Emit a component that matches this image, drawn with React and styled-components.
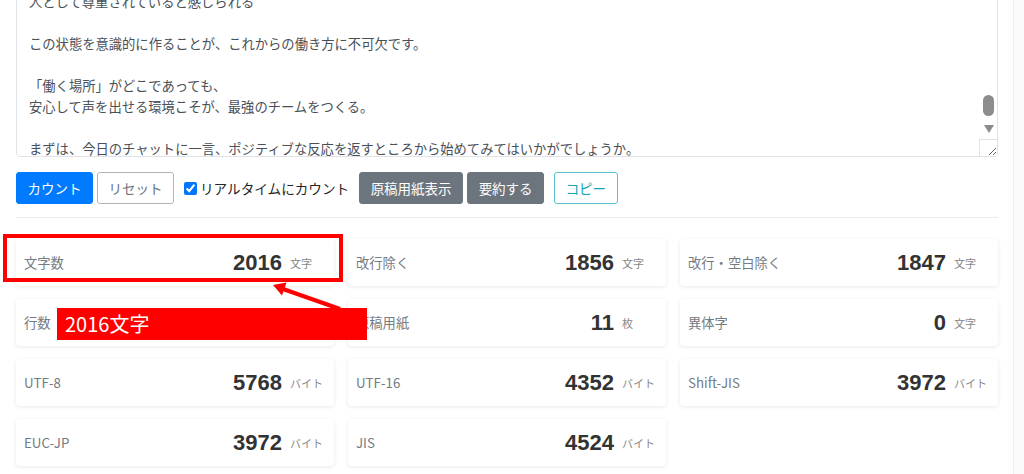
import React, { useEffect, useRef } from 'react';
import styled, { createGlobalStyle } from 'styled-components';

const GlobalStyle = createGlobalStyle`
  html, body {
    margin: 0;
    padding: 0;
    background: #fff;
    overflow: hidden;
  }
  body {
    font-family: "Noto Sans CJK JP", "Noto Sans", sans-serif;
    color: #212529;
  }
`;

const Layout = styled.div`
  display: flex;
  height: 474px;
  overflow: hidden;
`;

const Main = styled.main`
  flex: 1;
  min-width: 0;
  padding: 0 15px 0 16px;
  margin-top: -43px;
`;

const Gutter = styled.aside`
  width: 10px;
  background: #fafbfc;
  border-left: 1px solid #eceef1;
`;

const Field = styled.div`
  position: relative;
  height: 200px;
`;

const TextArea = styled.textarea`
  display: block;
  width: 100%;
  height: 100%;
  box-sizing: border-box;
  padding: 6px 30px 6px 12px;
  border: 1px solid #dfe3e7;
  border-radius: 4px;
  font: 13.3px/21px "Noto Sans CJK JP", sans-serif;
  color: #495057;
  resize: vertical;
  outline: none;
`;

/* the textarea's own scrollbar, drawn over its right edge */
const Thumb = styled.div`
  position: absolute;
  right: 4px;
  top: 138px;
  width: 11px;
  height: 21px;
  border-radius: 6px;
  background: #8c8c8c;
  pointer-events: none;
`;

const DownArrow = styled.div`
  position: absolute;
  right: 4px;
  top: 168px;
  width: 0;
  height: 0;
  border-left: 5px solid transparent;
  border-right: 5px solid transparent;
  border-top: 8px solid #8c8c8c;
  pointer-events: none;
`;

const Corner = styled.div`
  position: absolute;
  right: 1px;
  bottom: 1px;
  width: 17px;
  height: 16px;
  border-left: 1px solid #e3e3e3;
  border-top: 1px solid #e3e3e3;
  pointer-events: none;
`;

const Toolbar = styled.div`
  display: flex;
  align-items: center;
  gap: 4px;
  margin-top: 15px;
  height: 32px;
`;

const palette = {
  primary: { bg: '#007bff', border: '#007bff', color: '#fff' },
  secondary: { bg: '#6c757d', border: '#6c757d', color: '#fff' },
  outline: { bg: '#fff', border: '#adb5bd', color: '#6c757d' },
  info: { bg: '#fff', border: '#5bc0d3', color: '#17a2b8' },
};

const Button = styled.button`
  height: 32px;
  box-sizing: border-box;
  padding: 0 10.5px;
  border-radius: 3px;
  border: 1px solid ${(p) => palette[p.$variant].border};
  background: ${(p) => palette[p.$variant].bg};
  color: ${(p) => palette[p.$variant].color};
  font: 13.5px "Noto Sans CJK JP", sans-serif;
  margin-left: ${(p) => p.$space || 0}px;
  cursor: pointer;
`;

const Check = styled.label`
  display: flex;
  align-items: center;
  gap: 3px;
  margin: 0 6px 0 6px;
  font-size: 13.6px;
  color: #212529;

  input {
    width: 13px;
    height: 13px;
    margin: 0;
  }
`;

const Divider = styled.hr`
  border: 0;
  border-top: 1px solid #e9ecef;
  margin: 13px 0 21px;
`;

const Grid = styled.div`
  position: relative;
  display: grid;
  grid-template-columns: repeat(3, 1fr);
  column-gap: 14px;
  row-gap: 13px;
`;

const Card = styled.div`
  height: 47px;
  display: flex;
  align-items: center;
  padding-left: 8px;
  background: #fff;
  border-radius: 4px;
  box-shadow: 0 1px 4px rgba(0, 0, 0, 0.09);
`;

const Label = styled.span`
  flex: 1;
  font-size: 13.3px;
  color: #737b83;
`;

const Value = styled.span`
  font: bold 22px "Liberation Sans", Arial, sans-serif;
  color: #333;
`;

const Unit = styled.span`
  width: 36px;
  margin-left: 8px;
  padding-right: 8px;
  font-size: 11px;
  color: #888;
`;

const Highlight = styled.div`
  position: absolute;
  left: -13px;
  top: -5px;
  width: 340px;
  height: 48px;
  box-sizing: border-box;
  border: 4px solid #ff0000;
  pointer-events: none;
`;

const Callout = styled.div`
  position: absolute;
  left: 41px;
  top: 69px;
  width: 310px;
  height: 32px;
  box-sizing: border-box;
  padding-left: 8px;
  background: #ff0000;
  color: #fff;
  font: 20px/32px "Noto Sans CJK JP", sans-serif;
`;

const Arrow = styled.svg`
  position: absolute;
  left: 0;
  top: 0;
  overflow: visible;
  pointer-events: none;
`;

const text = `心理的安全性が高いチームでは、メンバー一人ひとりが安心して発言できます。
リモートワークが広がった今、この「安心感」はますます重要になっています。

オフィスにいれば、表情や雰囲気から相手の状態を察することができました。
しかしオンラインでは、テキストだけのやりとりが中心になり、
ちょっとした誤解や不安が生まれやすくなります。

たとえば、チャットで質問をしたのに返事がない。
会議で意見を言ったのに、反応がないまま次の話題に移ってしまう。
こうした小さな出来事の積み重ねが、
「発言しても意味がない」という空気をつくってしまうのです。

では、どうすればリモート環境でも心理的安全性を高められるのでしょうか。

ひとつは、反応を「見える化」することです。
スタンプや短いコメントでもかまいません。
「読みました」「ありがとう」「いいですね」と返すだけで、
発言した人は受け止めてもらえたと感じます。

もうひとつは、失敗を責めずに共有できる場をつくることです。
うまくいかなかったことを話せるチームは、学びのスピードも速くなります。

そして何より大切なのは、次の三つの状態です。

意見を言っても否定されない
失敗を共有しても責められない
人として尊重されていると感じられる

この状態を意識的に作ることが、これからの働き方に不可欠です。

「働く場所」がどこであっても、
安心して声を出せる環境こそが、最強のチームをつくる。

まずは、今日のチャットに一言、ポジティブな反応を返すところから始めてみてはいかがでしょうか。`;

const stats = [
  { label: '文字数', value: 2016, unit: '文字' },
  { label: '改行除く', value: 1856, unit: '文字' },
  { label: '改行・空白除く', value: 1847, unit: '文字' },
  { label: '行数', value: 161, unit: '行' },
  { label: '原稿用紙', value: 11, unit: '枚' },
  { label: '異体字', value: 0, unit: '文字' },
  { label: 'UTF-8', value: 5768, unit: 'バイト' },
  { label: 'UTF-16', value: 4352, unit: 'バイト' },
  { label: 'Shift-JIS', value: 3972, unit: 'バイト' },
  { label: 'EUC-JP', value: 3972, unit: 'バイト' },
  { label: 'JIS', value: 4524, unit: 'バイト' },
];

function StatCard({ label, value, unit }) {
  return (
    <Card>
      <Label>{label}</Label>
      <Value>{value}</Value>
      <Unit>{unit}</Unit>
    </Card>
  );
}

export default function App() {
  const areaRef = useRef(null);

  useEffect(() => {
    const el = areaRef.current;
    // the screenshot is not scrolled quite to the end
    if (el) el.scrollTop = el.scrollHeight - el.clientHeight - 9;
  }, []);

  return (
    <>
      <GlobalStyle />
      <Layout>
        <Main>
          <Field>
            <TextArea ref={areaRef} defaultValue={text} />
            <Thumb />
            <DownArrow />
            <Corner />
          </Field>
          <Toolbar>
            <Button $variant="primary">カウント</Button>
            <Button $variant="outline">リセット</Button>
            <Check>
              <input type="checkbox" defaultChecked />
              リアルタイムにカウント
            </Check>
            <Button $variant="secondary">原稿用紙表示</Button>
            <Button $variant="secondary">要約する</Button>
            <Button $variant="info" $space={6}>コピー</Button>
          </Toolbar>
          <Divider />
          <Grid>
            {stats.map((s) => (
              <StatCard key={s.label} {...s} />
            ))}
            <Highlight />
            <Arrow width="400" height="120">
              <line x1="324" y1="70" x2="267" y2="50" stroke="#ff0000" strokeWidth="4" />
              <polygon points="257,46 270.5,43.5 266,56.5" fill="#ff0000" />
            </Arrow>
            <Callout>2016文字</Callout>
          </Grid>
        </Main>
        <Gutter />
      </Layout>
    </>
  );
}
